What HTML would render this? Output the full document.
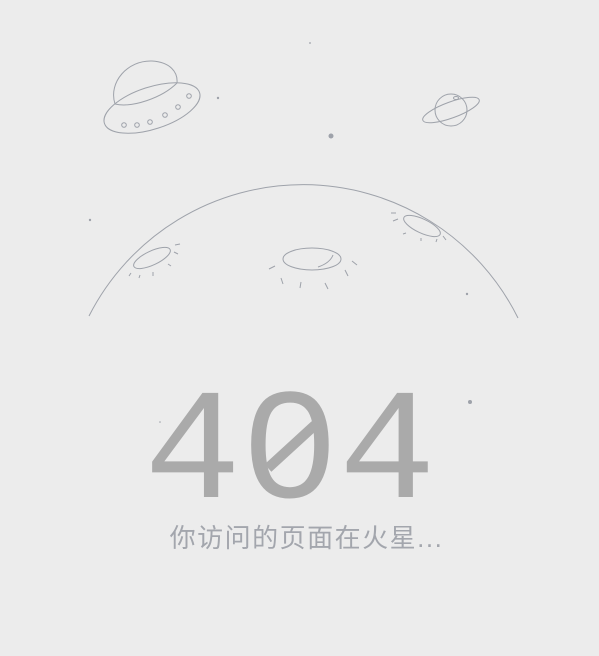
<!DOCTYPE html><html><head><meta charset="utf-8"><style>
html,body{margin:0;padding:0;background:#ececec;width:599px;height:656px;overflow:hidden}
svg{position:absolute;left:0;top:0}
.t{position:absolute;left:4px;width:605px;text-align:center;font-family:"Liberation Sans","Noto Sans CJK SC",sans-serif;font-size:26px;color:#a3a6ad;top:518px;letter-spacing:1.5px}
</style></head><body>
<svg width="599" height="656" viewBox="0 0 599 656">
<g fill="none" stroke="#9ea2aa" stroke-width="1">
<path d="M89 316 A240 240 0 0 1 518 318"/>
<g transform="rotate(-18 152 108)"><ellipse cx="152" cy="108" rx="50" ry="21"/></g>
<path d="M115 104 C108 82 128 60 152 61 C170 62 178 72 177 83"/>
<path d="M115 104 C132 108 162 98 177 83"/>
<circle cx="124" cy="125" r="2.3"/><circle cx="137" cy="125" r="2.3"/><circle cx="150" cy="122" r="2.3"/><circle cx="165" cy="115" r="2.3"/><circle cx="178" cy="107" r="2.3"/><circle cx="189" cy="96" r="2.3"/>
<circle cx="451" cy="110" r="16"/>
<g transform="rotate(-20 451 110)"><ellipse cx="451" cy="110" rx="30" ry="8"/></g>
<ellipse cx="456" cy="98" rx="2.5" ry="1.5"/>
<ellipse cx="312" cy="259" rx="29" ry="11"/>
<path d="M318 267 Q330 263 333 255"/>
<g transform="rotate(-25 152 258)"><ellipse cx="152" cy="258" rx="20" ry="7"/></g>
<g transform="rotate(25 422 226)"><ellipse cx="422" cy="226" rx="20" ry="7"/></g>
<path d="M269 269 L275 266 M281 278 L283 284 M301 282 L300 288 M325 283 L328 289 M345 270 L348 276 M352 261 L357 265"/>
<path d="M129 276 L131 273 M139 278 L140 275 M153 276 L153 272 M168 264 L171 266 M174 252 L178 254 M175 245 L180 244"/>
<path d="M391 213 L396 213 M393 221 L398 219 M403 234 L406 233 M421 241 L421 238 M436 242 L437 239 M446 240 L443 236"/>
</g>
<g fill="#9ea2aa">
<circle cx="331" cy="136" r="2.5"/><circle cx="218" cy="98" r="1.2"/><circle cx="310" cy="43" r="0.9"/><circle cx="90" cy="220" r="1.2"/><circle cx="467" cy="294" r="1.2"/><circle cx="470" cy="402" r="2"/><circle cx="160" cy="422" r="0.8"/>
</g>
<text x="290" y="497" text-anchor="middle" font-family="'Liberation Mono','DejaVu Sans Mono',monospace" font-size="158" fill="#aaaaaa" textLength="292" lengthAdjust="spacingAndGlyphs">404</text>
<rect x="276" y="428" width="30" height="34" fill="#ececec"/>
<line x1="268" y1="468" x2="315" y2="425" stroke="#aaaaaa" stroke-width="10"/>
</svg>
<div class="t">你访问的页面在火星...</div>
</body></html>
